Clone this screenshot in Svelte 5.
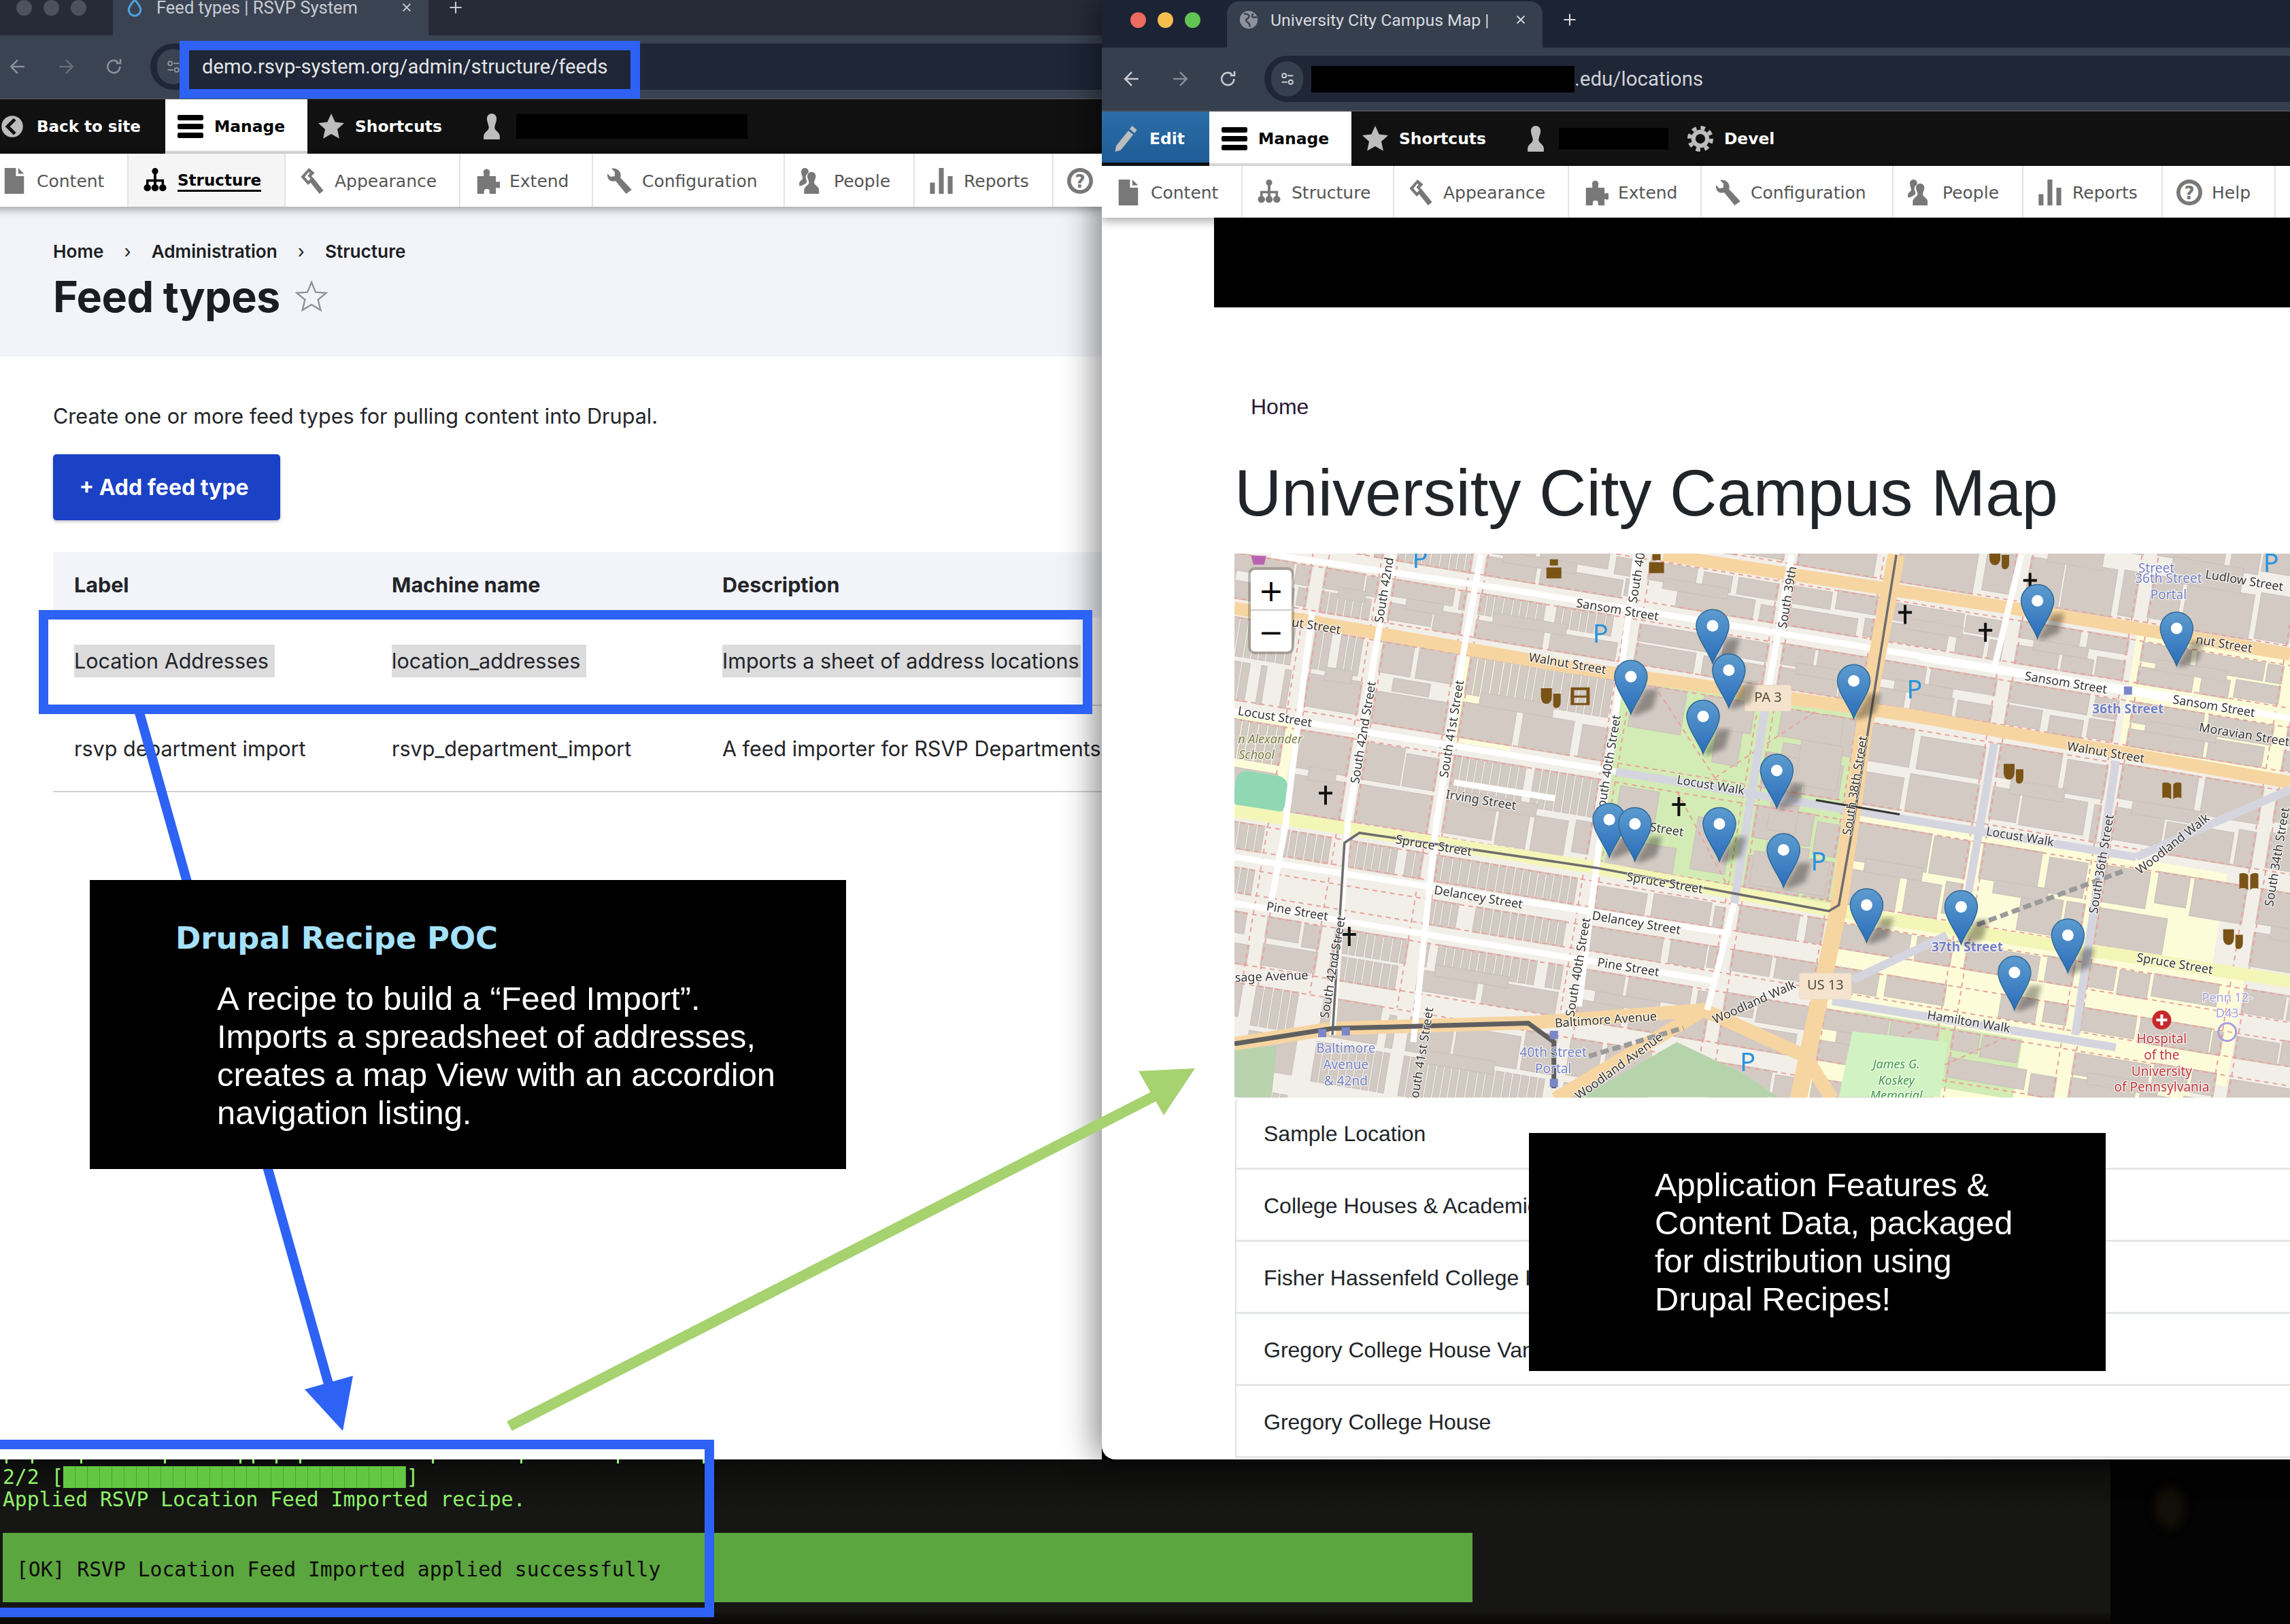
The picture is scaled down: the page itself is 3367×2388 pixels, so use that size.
<script>
  // map data is noted in coordinates read off the map crop, z() turns them into svg units
  const z = (x, y) => [+(x / 1.007 - 5).toFixed(1), +(y / 1.912 - 14).toFixed(1)];
  const pts = (list) => list.map((p) => z(p[0], p[1]).join(",")).join(" ");

  const U = [-160, 126, 227, 357, 595, 808, 955, 1147, 1329, 1560, 1800];
  const V = [-300, -105, -15, 78, 226, 375, 441, 505, 608, 760, 900];

  let seed = 4711;
  const rnd = () => (seed = (seed * 16807) % 2147483647) / 2147483647;

  function strip(out, u0, u1, v0, v1, slats) {
    let u = u0;
    while (u < u1 - 8) {
      const w = slats ? 8 + rnd() * 4 : 40 + rnd() * 84;
      const gap = slats ? 2.5 : 3 + rnd() * 10;
      const cut = slats ? 0 : rnd() * (v1 - v0) * 0.2;
      if (rnd() > 0.05) out.push([u, v0 + (rnd() > 0.5 ? cut : 0), Math.min(w, u1 - u), v1 - v0 - cut]);
      u += w + gap;
    }
  }

  function makeBlocks() {
    const out = [];
    for (let i = 0; i < U.length - 1; i++) {
      for (let j = 0; j < V.length - 1; j++) {
        if (U[i] === 595 && V[j] >= 78 && V[j] < 375) continue;
        const u0 = U[i] + 10, u1 = U[i + 1] - 10, v0 = V[j] + 13, v1 = V[j + 1] - 13;
        const d = v1 - v0;
        const west = U[i] < 595;
        if (d < 60) {
          strip(out, u0, u1, v0, v1, west && rnd() > 0.5);
        } else {
          const depth = Math.min(d * 0.47, 72);
          strip(out, u0, u1, v0, v0 + depth, west && rnd() > 0.55);
          strip(out, u0, u1, v1 - depth, v1, west && rnd() > 0.55);
          if (rnd() > 0.25) out.push([u0 + 24, v0 + depth - 6, (u1 - u0) * 0.5, d - depth * 2 + 12]);
        }
      }
    }
    return out;
  }
  const buildings = makeBlocks();

  const quadBuildings = [
    [612, 92, 78, 64], [716, 92, 76, 46], [742, 138, 38, 50], [832, 92, 92, 42], [868, 134, 62, 66],
    [616, 244, 58, 62], [612, 322, 100, 38], [736, 270, 52, 78], [838, 214, 42, 58], [826, 306, 112, 50]
  ];
  const yards = [
    [957, 226, 560, 400, "#fdfcd9"], [957, 375, 610, 160, "#fdfcd9"], [1000, 505, 420, 110, "#fdfcd9"],
    [1329, -110, 240, 190, "#fdfcd9"], [-160, 226, 290, 150, "#fdfcd9"], [357, 90, 90, 130, "#fdfcd9"],
    [957, 608, 640, 200, "#fdfcd9"]
  ];

  const footV = V.slice(1, 8).concat([608]);
  const footU = U.slice(1, 10);

  const whiteRoads = [
    [[60, 30], [420, 130], [940, 290], [1400, 430], [1568, 490]],
    [[5, 470], [570, 640]],
    [[5, 880], [300, 965], [520, 1030], [740, 1095]],
    [[5, 1010], [720, 1230]],
    [[240, 30], [216, 273], [173, 784], [150, 1380]],
    [[370, 30], [344, 306], [304, 784], [270, 1400]],
    [[120, 190], [80, 800], [60, 1000]],
    [[600, 30], [560, 620], [515, 1300]],
    [[830, 30], [790, 470]],
    [[745, 1010], [705, 1310]],
    [[1170, 30], [1130, 350]],
    [[330, 670], [480, 715]],
    [[1020, 320], [1568, 490]]
  ];
  const walks = [
    [[570, 640], [1340, 880]],
    [[890, 1285], [1310, 1415]],
    [[790, 470], [745, 1010]],
    [[1130, 560], [1090, 1000]],
    [[1310, 610], [1250, 1380]],
    [[920, 1225], [1060, 1100]],
    [[1340, 880], [1568, 690]]
  ];
  const orangeRoads = [
    [[5, 180], [500, 345], [1000, 480], [1568, 670]],
    [[640, 30], [1190, 190], [1568, 310]],
    [[5, 1405], [150, 1362], [450, 1345], [700, 1310], [850, 1440], [890, 1560]],
    [[480, 1560], [700, 1310]]
  ];
  const spruce = [[5, 750], [540, 910], [890, 1030], [1568, 1230]];
  const trolley = [[985, 30], [920, 800], [900, 1015], [885, 1032], [540, 910], [190, 812], [168, 840], [150, 1380]];
  const rail = [[5, 1405], [150, 1362], [440, 1347], [478, 1400], [478, 1530]];

  const pins = [[1194, 265], [1400, 342], [713, 335], [737, 460], [592, 478], [922, 490], [699, 590], [808, 742],
    [560, 880], [598, 892], [723, 892], [818, 965], [941, 1120], [1081, 1125], [1239, 1205], [1160, 1310]];

  const EW = 9.4, NS = -80.6;
  const labels = [
    ["Walnut Street", 105, 226, EW, ""], ["Sansom Street", 572, 187, EW, ""], ["Walnut Street", 498, 338, EW, ""],
    ["Locust Street", 65, 488, EW, ""], ["Irving Street", 370, 722, EW, ""], ["Locust Walk", 710, 680, EW, ""],
    ["Street", 645, 805, EW, ""], ["Spruce Street", 300, 850, EW, ""], ["Spruce Street", 642, 955, EW, ""],
    ["Delancey Street", 366, 995, EW, ""], ["Pine Street", 98, 1035, EW, ""], ["Delancey Street", 600, 1067, EW, ""],
    ["Pine Street", 588, 1192, EW, ""], ["Walnut Street", 1295, 588, EW, ""], ["nut Street", 1470, 283, EW, ""],
    ["Sansom Street", 1236, 392, EW, ""], ["Sansom Street", 1455, 458, EW, ""], ["Moravian Street", 1500, 538, EW, ""],
    ["Locust Walk", 1168, 825, EW, ""], ["Spruce Street", 1397, 1182, EW, ""], ["Hamilton Walk", 1092, 1345, EW, ""],
    ["Ludlow Street", 1500, 105, EW, ""], ["South 42nd", 228, 130, NS, ""], ["South 42nd Street", 197, 530, NS, ""],
    ["South 41st Street", 328, 520, NS, ""], ["South 40", 602, 95, NS, ""], ["South 40th Street", 560, 620, NS, ""],
    ["South 40th Street", 515, 1190, NS, ""], ["South 39th", 825, 150, NS, ""], ["South 38th Street", 925, 680, NS, ""],
    ["South 36th Street", 1290, 900, NS, ""], ["South 42nd Street", 152, 1190, NS, ""], ["South 41st Street", 283, 1440, NS, ""],
    ["South 34th Street", 1550, 880, NS, ""], ["Woodland Walk", 1395, 845, -38, ""], ["Woodland Walk", 775, 1290, -24, ""],
    ["Baltimore Avenue", 555, 1340, -4, ""], ["Woodland Avenue", 575, 1470, -36, ""], ["sage Avenue", 60, 1218, -2, ""],
    ["36th Street", 1328, 467, 0, "station bold"], ["37th Street", 1090, 1135, 0, "station bold"], ["Street", 1370, 70, 0, "station"],
    ["36th Street", 1388, 100, 0, "station"], ["Portal", 1388, 145, 0, "station"], ["Baltimore", 170, 1420, 0, "station"],
    ["Avenue", 170, 1467, 0, "station"], ["& 42nd", 170, 1512, 0, "station"], ["40th Street", 477, 1432, 0, "station"],
    ["Portal", 477, 1478, 0, "station"], ["Penn 12-", 1475, 1277, 0, "pale"], ["D43", 1475, 1322, 0, "pale"],
    ["Hospital", 1378, 1393, 0, "hosp"], ["of the", 1378, 1440, 0, "hosp"], ["University", 1378, 1485, 0, "hosp"],
    ["of Pennsylvania", 1378, 1530, 0, "hosp"], ["n Alexander", 58, 550, 0, "school"], ["School", 38, 595, 0, "school"],
    ["James G.", 985, 1465, 0, "park"], ["Koskey", 985, 1510, 0, "park"], ["Memorial", 985, 1552, 0, "park"]
  ];
  const parking = [[280, 48], [547, 258], [1012, 415], [870, 898], [1540, 58], [765, 1462]];
  const crosses = [[1183, 110], [998, 200], [1117, 250], [140, 708], [663, 740], [175, 1105]];
  const masks = [[473, 432], [1158, 645], [1483, 1110], [1137, 42]];
  const books = [[1393, 695], [1507, 950]];
  const stops = [[1328, 412], [135, 1375], [170, 1370], [478, 1380], [478, 1515]];
  const polices = [[478, 70], [630, 55]];
  const shields = [["PA 3", 795, 433, 68], ["US 13", 880, 1243, 76]];
  const film = z(517, 428);
  const cross = z(1378, 1338);
  const hh = z(1475, 1372);
  const shop = z(40, 52);
  const gee = z(30, 232);

  const paths = {
    back: "M8 1a7 7 0 1 0 0 14A7 7 0 1 0 8 1zM10.5 4 6.5 8l4 4-1.6 1.5L3.4 8l5.5-5.5z",
    menu: "M1 .8h14a1 1 0 0 1 1 1v1.4a1 1 0 0 1-1 1H1a1 1 0 0 1-1-1V1.8a1 1 0 0 1 1-1zM1 6.3h14a1 1 0 0 1 1 1v1.4a1 1 0 0 1-1 1H1a1 1 0 0 1-1-1V7.3a1 1 0 0 1 1-1zM1 11.8h14a1 1 0 0 1 1 1v1.4a1 1 0 0 1-1 1H1a1 1 0 0 1-1-1v-1.4a1 1 0 0 1 1-1z",
    star: "M8 0l2.4 5.3 5.6.6-4.2 3.8 1.2 5.8L8 12.6l-5 2.9 1.2-5.8L0 5.9l5.6-.6z",
    user: "M8 0a3 3 0 0 1 3 3c0 2-1 3.5-1.2 5.5C9.6 10.5 13 11.5 13 14v2H3v-2c0-2.5 3.4-3.5 3.2-5.5C6 6.5 5 5 5 3a3 3 0 0 1 3-3z",
    pencil: "M12 0l3 2.5-1.5 2-3-2.5zM9.7 3l3 2.5L5 15 1.5 16l.6-3.6z",
    content: "M2 0h7v5h5v11H2zM10.5 0 14 3.6h-3.5z",
    structure: "M8 0a2 2 0 0 1 .8 3.8V7h4.7v3.2a2.2 2.2 0 1 1-1.5 0V8.500H8.800v1.700a2.200 2.200 0 1 1-1.600 0V8.500H4v1.700a2.200 2.200 0 1 1-1.500 0V7h4.700V3.800A2 2 0 0 1 8 0z",
    appearance: "M1 5.5 6 0l3.500 3-2 2L9 6.500 15 14l-2.500 2L7 9l-1.500 1.500zM3.400 5.600 5.600 8 7 6.600 5.200 4.800 6.600 3.200 5.800 2.500z",
    extend: "M2 5h4V3.500a2 2 0 1 1 3.600 0V5h3.900v3.600h.7a2 2 0 1 1 0 3.600h-.7V16H9.600v-1.300a1.700 1.700 0 1 0-3.400 0V16H2z",
    config: "M3 .3 5 2.500V5l-2.500.5-2-2C0 7 2.500 9 5.500 8L12 16l3.500-2.500-7-7.500C9.500 3 7-.5 3 .3z",
    people: "M5.500 5a2.600 2.600 0 0 1 5.200 0c0 1.800-1 2.600-1 4 0 1.500 3 2.400 3 4.500V16H3.500v-2.500c0-2.100 3-3 3-4.500 0-1.400-1-2.200-1-4zM4 0a2.200 2.200 0 0 1 2 3.200C5 3.800 4.400 4.800 4.500 6c.1 1 .7 1.600.7 2.600 0 1-1.800 1.400-3.200 2.400H.5V9.500C.5 8 2.600 7.400 2.600 6.300 2.600 5.200 1.800 4.500 1.800 2.800A2.200 2.200 0 0 1 4 0z",
    reports: "M1 9h3v7H1zM6.500 0h3v16h-3zM12 5h3v11h-3z"
  };

  const leftTray = [
    ["Content", "content", 207], ["Structure", "structure", 231, true], ["Appearance", "appearance", 257], ["Extend", "extend", 195],
    ["Configuration", "config", 282], ["People", "people", 191], ["Reports", "reports", 204], ["Help", "help", 166]
  ];
  const rightTray = [
    ["Content", "content", 207], ["Structure", "structure", 223], ["Appearance", "appearance", 257], ["Extend", "extend", 195],
    ["Configuration", "config", 282], ["People", "people", 191], ["Reports", "reports", 205], ["Help", "help", 166]
  ];
  const accordion = ["Sample Location", "College Houses & Academic Buildings", "Fisher Hassenfeld College House", "Gregory College House Van Pelt Manor", "Gregory College House"];
  const ticks = [8, 46, 118, 241, 352, 371, 405, 440, 635, 765, 907, 1033];
</script>

{#snippet icon(name)}
  <svg class="ic" viewBox="0 0 16 16" aria-hidden="true">
    {#if name === "help"}
      <circle cx="8" cy="8" r="8" fill="currentColor" />
      <circle cx="8" cy="8" r="5.6" fill="#fff" />
      <text x="8" y="12" class="q">?</text>
    {:else if name === "gear"}
      <circle cx="8" cy="8" r="4.3" fill="none" stroke="currentColor" stroke-width="2.6" />
      <circle cx="8" cy="8" r="6.8" fill="none" stroke="currentColor" stroke-width="2.4" stroke-dasharray="2.7 2.64" />
    {:else}
      <path d={paths[name]} fill="currentColor" fill-rule="evenodd" />
    {/if}
  </svg>
{/snippet}

{#snippet chrome(title, url, favicon)}
  <div class="tabs">
    <div class="dots"><i></i><i></i><i></i></div>
    <div class="tab">
      {#if favicon === "drop"}
        <svg class="fav" viewBox="0 0 16 16"><path d="M8 1c1 2.500 5 5 5 9a5 5 0 0 1-10 0c0-4 4-6.500 5-9z" fill="none" stroke="#4d9fdc" stroke-width="1.8" /></svg>
      {:else}
        <svg class="fav" viewBox="0 0 16 16"><circle cx="8" cy="8" r="7.5" fill="#8d939c" /><path d="M4 3c3 0 5 1 4 3S5 7 6 9s3 1 3 5M12 3c-2 1-1 3 0 3h3" fill="none" stroke="#353f4e" stroke-width="1.3" /></svg>
      {/if}
      <span class="tab-title">{title}</span>
      <svg class="close" viewBox="0 0 12 12"><path d="M2 2l8 8M10 2l-8 8" stroke="currentColor" stroke-width="1.5" /></svg>
    </div>
    <svg class="plus" viewBox="0 0 14 14"><path d="M7 1v12M1 7h12" stroke="currentColor" stroke-width="1.5" /></svg>
  </div>
  <div class="bar">
    <svg class="nav" viewBox="0 0 20 20"><path d="M17 10H4M10 3l-7 7 7 7" fill="none" stroke="currentColor" stroke-width="1.8" /></svg>
    <svg class="nav dim" viewBox="0 0 20 20"><path d="M3 10h13M10 3l7 7-7 7" fill="none" stroke="currentColor" stroke-width="1.8" /></svg>
    <svg class="nav" viewBox="0 0 20 20"><path d="M16 10a6.500 6.500 0 1 1-2-4.700M16.500 2v4.500H12" fill="none" stroke="currentColor" stroke-width="1.8" /></svg>
    <div class="pill">
      <span class="site"><svg viewBox="0 0 20 20"><circle cx="6" cy="6" r="2.5" fill="none" stroke="currentColor" stroke-width="1.6" /><path d="M10 6h7M3 14h7" stroke="currentColor" stroke-width="1.6" /><circle cx="14" cy="14" r="2.5" fill="none" stroke="currentColor" stroke-width="1.6" /></svg></span>
      {@render url()}
    </div>
  </div>
{/snippet}

{#snippet tray(items)}
  <nav class="tray">
    {#each items as item}
      <div class="cell" class:active={item[3]} style="width:{item[2]}px">
        {@render icon(item[1])}<span>{item[0]}</span>
      </div>
    {/each}
  </nav>
{/snippet}

{#snippet leftUrl()}<span class="url bright">demo.rsvp-system.org/admin/structure/feeds</span>{/snippet}
{#snippet rightUrl()}<span class="hide-url"></span><span class="url">.edu/locations</span>{/snippet}

<div class="desk">
  <section class="terminal">
    <svg class="ticks" viewBox="0 0 1100 6">
      {#each ticks as t}<rect x={t} y="0" width="3" height="6" fill="#8ff06a" />{/each}
    </svg>
    <div class="term-lines">
      <div>2/2 [<span class="progress"></span>]</div>
      <div>Applied RSVP Location Feed Imported recipe.</div>
    </div>
    <div class="ok">[OK] RSVP Location Feed Imported applied successfully</div>
    <div class="other-app"><span class="blob"></span></div>
  </section>

  <section class="win win-left">
    {@render chrome("Feed types | RSVP System", leftUrl, "drop")}
    <div class="admin">
      <div class="ab ab-back">{@render icon("back")}<span>Back to site</span></div>
      <div class="ab ab-manage">{@render icon("menu")}<span>Manage</span></div>
      <div class="ab">{@render icon("star")}<span>Shortcuts</span></div>
      <div class="ab ab-user">{@render icon("user")}<span class="redact"></span></div>
    </div>
    {@render tray(leftTray)}
    <header class="page-head">
      <ol class="crumbs"><li>Home</li><li class="sep">›</li><li>Administration</li><li class="sep">›</li><li>Structure</li></ol>
      <h1>Feed types <svg class="fav-star" viewBox="0 0 24 24"><path d="M12 1.500l3 7.300 7.800.6-6 5 1.900 7.600L12 18l-6.700 4 1.900-7.600-6-5 7.800-.6z" fill="none" stroke="#8f9299" stroke-width="1.2" /></svg></h1>
    </header>
    <div class="page-body">
      <p>Create one or more feed types for pulling content into Drupal.</p>
      <div class="btn">+ Add feed type</div>
      <table>
        <thead><tr><th>Label</th><th>Machine name</th><th>Description</th></tr></thead>
        <tbody>
          <tr><td><mark>Location Addresses</mark></td><td><mark>location_addresses</mark></td><td><mark class="flush">Imports a sheet of address locations</mark></td></tr>
          <tr class="row-b"><td>rsvp department import</td><td>rsvp_department_import</td><td>A feed importer for RSVP Departments</td></tr>
        </tbody>
      </table>
    </div>
  </section>

  <section class="win win-right">
    {@render chrome("University City Campus Map |", rightUrl, "globe")}
    <div class="admin">
      <div class="ab ab-edit">{@render icon("pencil")}<span>Edit</span></div>
      <div class="ab ab-manage">{@render icon("menu")}<span>Manage</span></div>
      <div class="ab">{@render icon("star")}<span>Shortcuts</span></div>
      <div class="ab ab-user small">{@render icon("user")}<span class="redact"></span></div>
      <div class="ab ab-devel">{@render icon("gear")}<span>Devel</span></div>
    </div>
    {@render tray(rightTray)}
    <div class="site-banner"></div>
    <div class="site-body">
      <div class="site-crumb">Home</div>
      <h2>University City Campus Map</h2>
      <div class="map">
        <svg viewBox="0 0 1552 800" class="tiles">
          <defs>
            <linearGradient id="pinfill" x1="0" y1="0" x2="0" y2="1">
              <stop offset="0" stop-color="#5d9bcf" /><stop offset="1" stop-color="#2a6ebb" />
            </linearGradient>
            <filter id="soft"><feGaussianBlur stdDeviation="3.5" /></filter>
          </defs>
          <rect width="1552" height="800" fill="#f2efe9" />
          <g transform="rotate(9.4)">
            {#each yards as y}<rect x={y[0]} y={y[1]} width={y[2]} height={y[3]} fill={y[4]} />{/each}
            <rect x="595" y="78" width="360" height="297" fill="#d3ebb4" />
            <rect x="1010" y="515" width="250" height="90" fill="#d3ebb4" />
            {#each buildings as b}<rect x={b[0]} y={b[1]} width={b[2]} height={b[3]} fill="#d3cac3" stroke="#c8bfb8" stroke-width="1" />{/each}
            {#each quadBuildings as b}<rect x={b[0]} y={b[1]} width={b[2]} height={b[3]} fill="#d3cac3" stroke="#c8bfb8" stroke-width="1" />{/each}
            <g class="foot">
              {#each footV as v}
                <line x1="-200" x2="1800" y1={v - 14} y2={v - 14} /><line x1="-200" x2="1800" y1={v + 14} y2={v + 14} />
              {/each}
              {#each footU as u}
                <line y1="-320" y2="620" x1={u - 12} x2={u - 12} /><line y1="-320" y2="620" x1={u + 12} x2={u + 12} />
              {/each}
              <line x1="640" y1="90" x2="760" y2="220" /><line x1="880" y1="90" x2="740" y2="220" />
              <line x1="700" y1="240" x2="800" y2="370" /><line x1="1010" y1="600" x2="1110" y2="520" /><line x1="1110" y1="600" x2="1230" y2="520" />
            </g>
          </g>
          <rect x="0" y="323" width="77" height="56" rx="16" fill="#8fd8b3" transform="rotate(9.4 38 350)" />
          <polygon points={pts([[5, 1420], [68, 1410], [60, 1555], [5, 1555]])} fill="#b9d3ae" />
          <polygon points={pts([[660, 1400], [760, 1490], [810, 1555], [520, 1555]])} fill="#b6d4ab" />
          <polygon points={pts([[920, 1370], [1060, 1400], [1050, 1555], [900, 1555]])} fill="#d1f3c4" />
          {#each orangeRoads as r, i}<polyline points={pts(r)} class="road orange" style="stroke-width:{i < 2 ? 19 : 20}px" />{/each}
          <polyline points={pts(spruce)} class="road yellow" />
          {#each whiteRoads as r}<polyline points={pts(r)} class="road white" />{/each}
          {#each walks as r}<polyline points={pts(r)} class="road walk" />{/each}
          <polyline points={pts([[985, 30], [940, 480], [900, 1020], [840, 1560]])} class="road orange wide" />
          <polyline points={pts(trolley)} class="tram" />
          <polyline points={pts(rail)} class="tram thick" />
          <polyline points={pts([[1105, 1070], [1320, 920]])} class="rail" />
          <polyline points={pts([[530, 1440], [670, 1360]])} class="rail" />
          <polyline points={pts([[866, 720], [990, 760]])} class="rail thin" />

          {#each stops as s}
            {@const p = z(s[0], s[1])}
            <rect x={p[0] - 6} y={p[1] - 6} width="12" height="12" fill="#7986c8" />
          {/each}
          {#each crosses as c}
            {@const p = z(c[0], c[1])}
            <path d="M{p[0] - 2} {p[1] - 15}h4v9h8v4h-8v15h-4v-15h-8v-4h8z" fill="#111" />
          {/each}
          {#each masks as m}
            {@const p = z(m[0], m[1])}
            <path d="M{p[0] - 14} {p[1] - 14}h16v12c0 8-4 11-8 11s-8-3-8-11zM{p[0] + 4} {p[1] - 6}h11v12c0 6-3 9-6 9s-5-2-5-5z" fill="#7a5316" />
          {/each}
          <path d="M{film[0] - 14} {film[1] - 13}h28v26h-28zM{film[0] - 9} {film[1] - 9}v8h18v-8zM{film[0] - 9} {film[1] + 2}v8h18v-8z" fill="#7a5316" fill-rule="evenodd" />
          {#each books as b}
            {@const p = z(b[0], b[1])}
            <path d="M{p[0] - 14} {p[1] - 12}c5-2 10-1 13 2v22c-3-3-8-4-13-2zM{p[0] + 14} {p[1] - 12}c-5-2-10-1-12 2v22c2-3 7-4 12-2z" fill="#7a5316" />
          {/each}
          {#each polices as b}
            {@const p = z(b[0], b[1])}
            <path d="M{p[0] - 6} {p[1] - 14}h12v9h-12zM{p[0] - 11} {p[1] - 2}h22v16h-22z" fill="#7a5316" />
          {/each}
          <circle cx={cross[0]} cy={cross[1]} r="14" fill="#c8282d" />
          <path d="M{cross[0] - 2} {cross[1] - 8}h4v6h6v4h-6v6h-4v-6h-6v-4h6z" fill="#fff" />
          <circle cx={hh[0]} cy={hh[1]} r="13" fill="none" stroke="#a99de0" stroke-width="3" />
          <path d="M{shop[0] - 10} {shop[1] - 10}h22l-3 13h-16z" fill="#ac39ac" opacity=".7" />
          <text x={gee[0]} y={gee[1]} class="gee">G</text>

          {#each parking as q}
            {@const p = z(q[0], q[1])}
            <text x={p[0]} y={p[1]} class="park-p">P</text>
          {/each}
          {#each labels as l}
            {@const p = z(l[1], l[2])}
            <text transform="translate({p[0]} {p[1]}) rotate({l[3]})" class="lbl {l[4]}">{l[0]}</text>
          {/each}
          {#each shields as s}
            {@const p = z(s[1], s[2])}
            <rect x={p[0] - s[3] / 2} y={p[1] - 19} width={s[3]} height="38" rx="3" fill="#f5e3cd" stroke="#eadcc8" />
            <text x={p[0]} y={p[1]} class="lbl shield">{s[0]}</text>
          {/each}
          {#each pins as t}
            {@const p = z(t[0], t[1])}
            <path d="M{p[0]} {p[1]} l22 -36 h18 l-8 28 l-24 10z" fill="#000" opacity=".32" filter="url(#soft)" />
            <path d="M{p[0]} {p[1]}c-5-15-24-38-24-55a24 24 0 1 1 48 0c0 17-19 40-24 55z" fill="url(#pinfill)" stroke="#2f6a95" stroke-width="1.5" />
            <circle cx={p[0]} cy={p[1] - 55} r="8.5" fill="#fff" />
          {/each}
        </svg>
        <div class="zoomer">
          <div class="z-btn">+</div>
          <div class="z-btn">−</div>
        </div>
      </div>
      <ul class="accordion">
        {#each accordion as name}<li>{name}</li>{/each}
      </ul>
    </div>
  </section>

  <svg class="arrows" viewBox="0 0 3367 2388">
    <path d="M205 1048 483 2035" stroke="#2d62f5" stroke-width="14" fill="none" />
    <polygon points="448,2043 519,2023 504,2104" fill="#2d62f5" />
    <path d="M749 2097 1697 1612" stroke="#a6d26f" stroke-width="16" fill="none" />
    <polygon points="1674,1575 1757,1571 1711,1640" fill="#a6d26f" />
  </svg>

  <div class="frame frame-url"></div>
  <div class="frame frame-row"></div>
  <div class="frame frame-term"></div>

  <aside class="note note-left">
    <h3>Drupal Recipe POC</h3>
    <p>A recipe to build a “Feed Import”.<br />Imports a spreadsheet of addresses,<br />creates a map View with an accordion<br />navigation listing.</p>
  </aside>
  <aside class="note note-right">
    <p>Application Features &amp;<br />Content Data, packaged<br />for distribution using<br />Drupal Recipes!</p>
  </aside>
</div>

<style>
  :global(body) { margin: 0; background: #000; }
  .desk { position: relative; width: 3367px; height: 2388px; overflow: hidden; background: #000; font-family: Inter, sans-serif; }

  /* windows on the desktop */
  .win { position: absolute; background: #fff; overflow: hidden; display: flex; flex-direction: column; }
  .win-left { left: -18px; top: -18px; width: 1638px; height: 2164px; --strip: #272b38; --face: #3a4352; --pill: #1f2637; --ink: #c9ccd2; --glyph: #8b909a; }
  .win-right { left: 1620px; top: 0; width: 1747px; height: 2146px; border-bottom-left-radius: 20px; box-shadow: -8px 0 50px rgba(0, 0, 0, .5); --strip: #1c2334; --face: #353f4e; --pill: #1f2636; --ink: #d8dade; --glyph: #c9ccd2; }

  .tabs { height: 70px; flex: none; display: flex; align-items: flex-end; background: var(--strip); color: var(--ink); font-family: Roboto, sans-serif; }
  .dots { display: flex; gap: 17px; width: 164px; padding: 0 0 29px 42px; box-sizing: border-box; height: 70px; align-items: flex-end; }
  .dots i { width: 23px; height: 23px; border-radius: 50%; flex: none; }
  .win-right .dots i:nth-child(1) { background: #ec6a5e; }
  .win-right .dots i:nth-child(2) { background: #f4bf4f; }
  .win-right .dots i:nth-child(3) { background: #61c554; }
  .win-left .dots i { background: #4c515c; }
  .tab { width: 464px; height: 68px; margin-left: 20px; box-sizing: border-box; background: var(--face); border-radius: 18px 18px 0 0; display: flex; align-items: center; padding: 0 20px 14px 18px; }
  .fav { width: 28px; height: 28px; flex: none; margin-right: 18px; }
  .tab-title { flex: 1; font-size: 25.5px; white-space: nowrap; overflow: hidden; }
  .win-right .tab-title { font-size: 24.8px; }
  .close { width: 16px; height: 16px; flex: none; margin-left: 8px; margin-right: 4px; }
  .plus { width: 20px; height: 20px; margin: 0 0 31px 30px; }

  .bar { height: 94px; flex: none; box-sizing: border-box; display: flex; align-items: center; background: var(--face); color: var(--glyph); padding-left: 30px; border-bottom: 2px solid #4a4d55; }
  .nav { width: 28px; height: 28px; margin-right: 43px; flex: none; }
  .nav.dim { opacity: .55; }
  .pill { flex: 1; height: 68px; margin-left: -4px; background: var(--pill); border-radius: 34px 0 0 34px; display: flex; align-items: center; padding-left: 10px; }
  .site { width: 47px; height: 52px; border-radius: 26px; background: var(--face); display: flex; align-items: center; justify-content: center; }
  .site svg { width: 24px; height: 24px; }
  .hide-url { width: 387px; height: 39px; margin-left: 12px; background: #000; }
  .url { font-family: Roboto, sans-serif; font-size: 29.5px; color: #cfd2d8; }
  .url.bright { margin-left: 19px; color: #e3e5e8; font-size: 29.2px; }

  .admin { height: 80px; flex: none; display: flex; align-items: stretch; background: #111; color: #fff; font-family: "DejaVu Sans", sans-serif; font-weight: 700; font-size: 23.4px; }
  .ab { display: flex; align-items: center; gap: 16px; padding: 0 22px 0 16px; }
  .ab .ic { width: 38px; height: 38px; color: #bdbdbd; flex: none; }
  .ab-back { width: 261px; box-sizing: border-box; padding-left: 18px; gap: 18px; font-size: 23px; }
  .ab-back .ic { width: 36px; height: 36px; }
  .ab-manage { background: #fff; color: #000; width: 209px; box-sizing: border-box; padding-left: 18px; box-shadow: inset 0 -4px 0 #ddd; }
  .ab-manage .ic { color: #000; }
  .ab-edit { width: 158px; box-sizing: border-box; background: linear-gradient(#2b6ea8, #1f5a95); box-shadow: inset 0 -5px 0 #111; }
  .ab-user { padding-left: 32px; gap: 17px; }
  .redact { width: 340px; height: 36px; background: #000; }
  .small .redact { width: 161px; height: 32px; }
  .ab-user.small { gap: 15px; padding-right: 0; }
  .ab-devel { padding-left: 28px; }

  .tray { height: 76px; flex: none; display: flex; background: #fff; color: #555; font-family: "DejaVu Sans", sans-serif; font-size: 25px; position: relative; z-index: 2; }
  .cell { flex: none; box-sizing: border-box; display: flex; align-items: center; gap: 14px; padding: 2px 0 0 20px; border-right: 2px solid #e3e3e3; white-space: nowrap; }
  .cell:first-child { padding-left: 20px; }
  .cell .ic { width: 38px; height: 38px; color: #787878; flex: none; }
  .cell.active { background: #f5f5f5; color: #000; font-weight: 700; font-size: 23px; }
  .cell.active .ic { color: #000; }
  .cell.active span { border-bottom: 3px solid #000; line-height: 28px; }
  .q { font: 700 11px "DejaVu Sans", sans-serif; text-anchor: middle; fill: #787878; }

  .win-left .tray { height: 78px; box-shadow: 0 4px 12px rgba(0, 0, 0, .35); }
  .page-head { height: 220px; flex: none; box-sizing: border-box; background: #f3f4f9; padding: 48px 0 0 96px; color: #1c1d22; }
  .crumbs { list-style: none; margin: 0; padding: 0; display: flex; gap: 30px; font-size: 26.2px; font-weight: 600; line-height: 36px; }
  .sep { font-weight: 400; }
  h1 { margin: 8px 0 0; font-size: 63px; font-weight: 700; line-height: 80px; letter-spacing: -.6px; display: flex; align-items: center; gap: 22px; }
  .fav-star { width: 48px; height: 48px; }

  .page-body { padding: 66px 0 0 96px; color: #232429; }
  p { margin: 0; }
  .page-body p { font-size: 30.6px; line-height: 44px; }
  .btn { width: 334px; height: 97px; margin-top: 34px; box-sizing: border-box; padding-right: 8px; display: flex; align-items: center; justify-content: center; background: #1b41c5; color: #fff; font-size: 32px; font-weight: 700; border-radius: 5px; box-shadow: 0 2px 4px rgba(0, 0, 0, .25); }
  table { margin-top: 47px; width: 1700px; border-collapse: collapse; font-size: 30.5px; table-layout: fixed; }
  th, td { text-align: left; padding: 0 0 0 31px; white-space: nowrap; }
  th { height: 95px; background: #f3f4f9; font-weight: 700; }
  th:nth-child(1), td:nth-child(1) { width: 436px; }
  th:nth-child(2), td:nth-child(2) { width: 455px; }
  td { border-bottom: 2px solid #d2d2d4; height: 129px; }
  .row-b td { height: 125px; }
  mark { background: #dcdcdc; color: inherit; display: inline-block; line-height: 48px; padding-right: 9px; }
  mark.flush { padding-right: 2px; }

  .site-banner { height: 132px; margin-left: 165px; background: #000; flex: none; position: relative; z-index: 3; margin-top: 0; }
  .win-right .tray { box-shadow: 0 6px 12px rgba(0, 0, 0, .3); }
  .site-body { flex: 1; padding-left: 195px; font-family: "Liberation Sans", sans-serif; overflow: hidden; }
  .site-crumb { margin: 126px 0 0 24px; font-size: 32px; line-height: 40px; color: #2a1a33; }
  h2 { margin: 49px 0 0; font-size: 96px; font-weight: 400; line-height: 116px; color: #212529; }
  .map { position: relative; height: 800px; margin-top: 31px; overflow: hidden; }
  .tiles { display: block; width: 1552px; height: 800px; filter: blur(.6px); }
  .zoomer { position: absolute; left: 24px; top: 24px; width: 60px; background: #fff; border-radius: 6px; box-shadow: 0 0 0 4px rgba(0, 0, 0, .22); font-family: "DejaVu Sans", sans-serif; }
  .z-btn { height: 60px; box-sizing: border-box; padding-top: 3px; display: flex; align-items: center; justify-content: center; font-size: 44px; line-height: 1; color: #000; }
  .z-btn:first-child { border-bottom: 2px solid #ccc; }

  .foot line { stroke: #e9a39b; stroke-width: 2; stroke-dasharray: 7 6; }
  .road { fill: none; stroke-linejoin: round; }
  .orange { stroke: #f7d5a1; }
  .wide { stroke-width: 25px; }
  .yellow { stroke: #f4f6b8; stroke-width: 19px; }
  .white { stroke: #fff; stroke-width: 9px; }
  .walk { stroke: #d5d5e0; stroke-width: 12px; }
  .tram { fill: none; stroke: #6d6d6d; stroke-width: 3.5px; }
  .tram.thick { stroke: #5f5f5f; stroke-width: 7px; }
  .rail { fill: none; stroke: #9a9a9a; stroke-width: 7px; stroke-dasharray: 12 6; }
  .rail.thin { stroke: #333; stroke-width: 3px; stroke-dasharray: none; }
  .lbl { font: 18px "Noto Sans", sans-serif; fill: #333; text-anchor: middle; dominant-baseline: middle; paint-order: stroke; stroke: rgba(255, 255, 255, .75); stroke-width: 2.5px; }
  .station { fill: #7380c4; font-size: 19px; }
  .bold { font-weight: 700; }
  .pale { fill: #a6a0dc; }
  .hosp { fill: #c4373b; font-size: 19px; }
  .school { fill: #7b7d3f; font-style: italic; }
  .park { fill: #3f9a48; font-style: italic; }
  .shield { font-size: 20px; fill: #4f4b3c; stroke: none; }
  .park-p { font: 38px "Noto Sans", sans-serif; fill: #2a94dc; text-anchor: middle; dominant-baseline: middle; }
  .gee { font: 700 34px "Liberation Sans", sans-serif; fill: #000; }

  .accordion { list-style: none; margin: 0 0 0 1px; padding: 0; border-left: 2px solid #dee2e6; border-top-left-radius: 8px; }
  .accordion li { height: 106px; box-sizing: border-box; border-bottom: 3px solid #e3e6e8; padding: 3px 0 0 40px; display: flex; align-items: center; font-size: 32px; color: #212529; white-space: nowrap; }

  .terminal { position: absolute; left: 0; top: 2146px; width: 3367px; height: 242px; background: linear-gradient(#0c0c0c, #161614 30%, #161614 92%, #0a0505); font-family: "DejaVu Sans Mono", monospace; font-size: 29.7px; }
  .ticks { position: absolute; left: 0; top: 0; width: 1100px; height: 6px; }
  .term-lines { padding: 9px 0 0 4px; color: #8ff06a; line-height: 33px; }
  .term-lines div { height: 33px; white-space: pre; }
  .progress { display: inline-block; width: 504px; height: 32px; vertical-align: -6px; background: repeating-linear-gradient(90deg, #62c844 0 17px, #4d9f36 17px 18px); }
  .ok { position: absolute; left: 4px; top: 108px; width: 2161px; height: 102px; box-sizing: border-box; padding-left: 20px; padding-top: 4px; display: flex; align-items: center; background: #5ba63f; color: #0b0b0b; }
  .other-app { position: absolute; right: 0; top: 0; width: 264px; height: 242px; background: #030303; }
  .blob { position: absolute; left: 64px; top: 40px; width: 46px; height: 62px; border-radius: 50%; background: #120e08; filter: blur(6px); }

  /* slide annotations laid over the screenshots */
  .arrows { position: absolute; left: 0; top: 0; width: 3367px; height: 2388px; pointer-events: none; }
  .frame { position: absolute; box-sizing: border-box; border: 14px solid #2d62f5; }
  .frame-url { left: 264px; top: 60px; width: 677px; height: 85px; }
  .frame-row { left: 57px; top: 897px; width: 1549px; height: 153px; }
  .frame-term { left: -20px; top: 2117px; width: 1070px; height: 261px; }
  .note { position: absolute; background: #000; color: #fff; box-sizing: border-box; font-family: "Liberation Sans", sans-serif; font-size: 48.8px; line-height: 56px; }
  .note-left { left: 132px; top: 1294px; width: 1112px; height: 425px; padding: 54px 0 0 126px; }
  .note-left h3 { margin: 0 0 28px; color: #a5e1fb; font: 700 44.9px/64px "DejaVu Sans", sans-serif; }
  .note-left p { margin-left: 61px; }
  .note-right { left: 2248px; top: 1666px; width: 848px; height: 350px; padding: 48px 0 0 185px; }
</style>
